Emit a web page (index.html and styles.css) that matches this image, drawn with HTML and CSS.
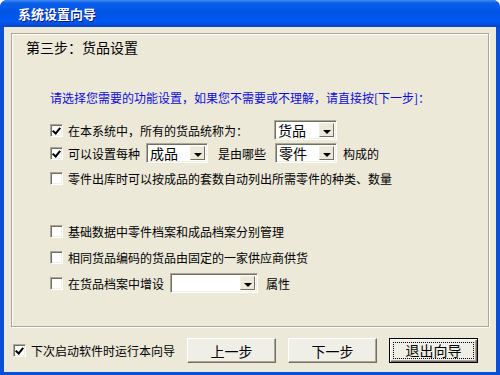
FILE: index.html
```html
<!DOCTYPE html>
<html lang="zh-CN">
<head>
    <meta charset="UTF-8">
    <title>系统设置向导</title>
    <link rel="stylesheet" href="styles.css">
</head>
<body>
    <div class="window">
        <div class="title-bar">系统设置向导</div>
        <div class="client">
            <div class="panel">
                <div class="step-title">第三步：货品设置</div>
                <div class="hint">请选择您需要的功能设置，如果您不需要或不理解，请直接按[下一步]：</div>

                <div class="row row-1">
                    <span class="check checked"></span>
                    <span class="label">在本系统中，所有的货品统称为：</span>
                    <span class="combo combo-a"><span class="combo-text">货品</span><span class="combo-btn"></span></span>
                </div>
                <div class="row row-2">
                    <span class="check checked"></span>
                    <span class="label">可以设置每种</span>
                    <span class="combo combo-b"><span class="combo-text">成品</span><span class="combo-btn"></span></span>
                    <span class="label gap-l">是由哪些</span>
                    <span class="combo combo-c"><span class="combo-text">零件</span><span class="combo-btn"></span></span>
                    <span class="label gap-s">构成的</span>
                </div>
                <div class="row row-3">
                    <span class="check"></span>
                    <span class="label">零件出库时可以按成品的套数自动列出所需零件的种类、数量</span>
                </div>

                <div class="row row-4">
                    <span class="check"></span>
                    <span class="label">基础数据中零件档案和成品档案分别管理</span>
                </div>
                <div class="row row-5">
                    <span class="check"></span>
                    <span class="label">相同货品编码的货品由固定的一家供应商供货</span>
                </div>
                <div class="row row-6">
                    <span class="check"></span>
                    <span class="label">在货品档案中增设</span>
                    <span class="combo combo-d"><span class="combo-text"></span><span class="combo-btn"></span></span>
                    <span class="label gap-m">属性</span>
                </div>
            </div>

            <div class="footer">
                <div class="startup">
                    <span class="check checked"></span>
                    <span class="label">下次启动软件时运行本向导</span>
                </div>
                <div class="buttons">
                    <button class="btn">上一步</button>
                    <button class="btn">下一步</button>
                    <button class="btn btn-default"><span class="focus">退出向导</span></button>
                </div>
            </div>
        </div>
    </div>
</body>
</html>
```

FILE: styles.css
```css
body {
    margin: 0;
    padding: 0;
    background: #fff;
    font-family: "Noto Sans CJK SC", "Liberation Sans", sans-serif;
    font-size: 12px;
    color: #000;
}
.window {
    width: 500px;
    height: 375px;
    display: flex;
    flex-direction: column;
    background: #0a4fd8;
    border-radius: 7px 7px 0 0;
    overflow: hidden;
}
.title-bar {
    height: 27px;
    line-height: 27px;
    padding-left: 18px;
    color: #fff;
    font-weight: bold;
    font-size: 13px;
    text-shadow: 1px 1px #0a1883;
    background: linear-gradient(to bottom, #3f8cf3 0%, #0a5ee8 12%, #0055e6 45%, #0158f0 80%, #0746c6 100%);
    flex: none;
}
.client {
    flex: 1;
    margin: 0 4px 3px 4px;
    background: #ece9d8;
    display: flex;
    flex-direction: column;
}
.panel {
    margin: 6px 7px 0 7px;
    height: 294px;
    box-sizing: border-box;
    border: 1px solid #aca899;
    box-shadow: inset 1px 1px #fff, 1px 1px #fff;
    display: flex;
    flex-direction: column;
}
.step-title {
    height: 20px;
    line-height: 20px;
    margin: 3px 0 0 14px;
    font-size: 14px;
}
.hint {
    height: 20px;
    line-height: 20px;
    margin: 31px 0 0 38px;
    color: #0c0cd8;
}
.row {
    height: 20px;
    display: flex;
    align-items: center;
    margin-left: 38px;
}
.row-1 { margin-top: 12px; }
.row-2 { margin-top: 3px; }
.row-3 { margin-top: 5px; }
.row-4 { margin-top: 33px; }
.row-5 { margin-top: 6px; }
.row-6 { margin-top: 6px; }
.check {
    width: 13px;
    height: 13px;
    box-sizing: border-box;
    background: #fff;
    border-top: 1px solid #aca899;
    border-left: 1px solid #aca899;
    border-right: 1px solid #fff;
    border-bottom: 1px solid #fff;
    box-shadow: inset 1px 1px #716f64, inset -1px -1px #f1efe2;
    flex: none;
    position: relative;
}
.check.checked::after {
    content: "";
    position: absolute;
    left: 3px;
    top: 1px;
    width: 3px;
    height: 6px;
    border-right: 2px solid #000;
    border-bottom: 2px solid #000;
    transform: rotate(40deg);
}
.label {
    margin-left: 5px;
    white-space: nowrap;
}
.gap-l { margin-left: 10px; }
.gap-m { margin-left: 8px; }
.gap-s { margin-left: 6px; }
.combo {
    height: 20px;
    box-sizing: border-box;
    display: flex;
    background: #fff;
    border-top: 1px solid #aca899;
    border-left: 1px solid #aca899;
    border-right: 1px solid #fff;
    border-bottom: 1px solid #fff;
    box-shadow: inset 1px 1px #716f64, inset -1px -1px #f1efe2;
    padding: 2px;
}
.combo-a { width: 63px; margin-left: 26px; }
.combo-b { width: 62px; margin-left: 6px; }
.combo-c { width: 62px; margin-left: 9px; }
.combo-d { width: 88px; margin-left: 6px; }
.combo-text {
    flex: 1;
    font-size: 14px;
    line-height: 14px;
    padding-left: 1px;
}
.combo-btn {
    width: 15px;
    box-sizing: border-box;
    background: #ece9d8;
    border-top: 1px solid #f1efe2;
    border-left: 1px solid #f1efe2;
    border-right: 1px solid #716f64;
    border-bottom: 1px solid #716f64;
    position: relative;
}
.combo-btn::after {
    content: "";
    position: absolute;
    left: 3px;
    top: 6px;
    border-left: 4px solid transparent;
    border-right: 4px solid transparent;
    border-top: 4px solid #000;
}
.footer {
    flex: 1;
    display: flex;
    align-items: center;
    justify-content: space-between;
    padding: 2px 18px 0 9px;
}
.startup {
    display: flex;
    align-items: center;
}
.buttons {
    display: flex;
    gap: 12px;
}
.btn {
    width: 89px;
    height: 25px;
    font-family: "Noto Sans CJK SC", sans-serif;
    font-size: 14px;
    background: #f0efe7;
    border: 1px solid;
    border-color: #fff #716f64 #716f64 #fff;
    box-shadow: inset -1px -1px #aca899;
    padding: 0;
    color: #000;
}
.btn-default {
    border: 1px solid #000;
    box-shadow: inset 1px 1px #fff, inset -1px -1px #716f64, inset -2px -2px #aca899;
    padding: 3px;
}
.focus {
    display: block;
    height: 100%;
    box-sizing: border-box;
    border: 1px dotted #000;
    line-height: 15px;
}
```
